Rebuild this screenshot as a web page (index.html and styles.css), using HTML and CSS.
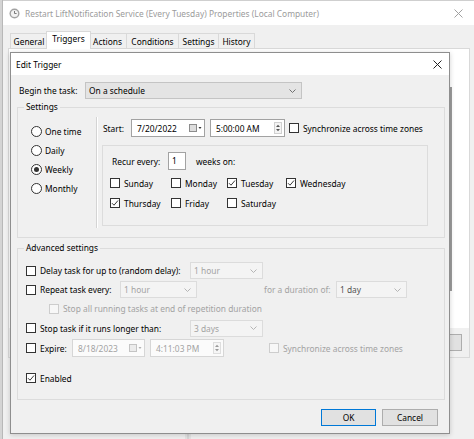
FILE: index.html
```html
<!DOCTYPE html>
<html lang="en">
<head>
<meta charset="utf-8">
<title>Edit Trigger</title>
<link rel="stylesheet" href="styles.css">
</head>
<body>
<div class="bgwin">
  <div class="titlebar">
    <svg class="clock" width="11" height="11" viewBox="0 0 11 11"><circle cx="5.5" cy="5.5" r="5" fill="#a2a2a2"/><circle cx="5.5" cy="5.5" r="3.6" fill="#f2f2f2"/><path d="M5.5 5.5V3M5.5 5.5H7.6" stroke="#7a7a7a" stroke-width="1" fill="none"/></svg>
    <span class="title">Restart LiftNotification Service (Every Tuesday) Properties (Local Computer)</span>
    <svg class="tb-close" width="9" height="9" viewBox="0 0 9 9"><path d="M0.5 0.5L8.5 8.5M8.5 0.5L0.5 8.5" stroke="#a0a0a0" stroke-width="1"/></svg>
  </div>
  <div class="tabs">
    <span class="tab w-general">General</span>
    <span class="tab active w-triggers">Triggers</span>
    <span class="tab w-actions">Actions</span>
    <span class="tab w-conditions">Conditions</span>
    <span class="tab w-settings">Settings</span>
    <span class="tab w-history">History</span>
  </div>
  <div class="panel">
    <div class="list"><span class="vscroll"></span></div>
    <div class="panel-foot"><span class="ghost-btn"></span></div>
  </div>
</div>
<span class="bg-mark"></span>

<div class="dialog">
  <div class="dlg-title">
    <span>Edit Trigger</span>
    <svg class="dlg-close" width="9" height="9" viewBox="0 0 9 9"><path d="M0.5 0.5L8.5 8.5M8.5 0.5L0.5 8.5" stroke="#222" stroke-width="1"/></svg>
  </div>
  <div class="dlg-body">
    <div class="begin-row">
      <span class="lbl-begin">Begin the task:</span>
      <div class="combo combo-begin"><span>On a schedule</span><svg width="7" height="4" viewBox="0 0 7 4"><path d="M0.5 0.5L3.5 3.5L6.5 0.5" stroke="#707070" fill="none"/></svg></div>
    </div>

    <fieldset class="group settings">
      <legend>Settings</legend>
      <div class="settings-inner">
        <div class="freq">
          <div class="radio-row"><span class="radio"></span>One time</div>
          <div class="radio-row"><span class="radio"></span>Daily</div>
          <div class="radio-row"><span class="radio on"><span class="dot"></span></span>Weekly</div>
          <div class="radio-row"><span class="radio"></span>Monthly</div>
        </div>
        <div class="vsep"></div>
        <div class="sched">
          <div class="start-row">
            <span class="lbl-start">Start:</span>
            <div class="field date"><span class="ftext">7/20/2022</span><svg width="13" height="8" viewBox="0 0 13 8"><rect x="0.5" y="0.5" width="7" height="7" fill="#dedede" stroke="#8c8c8c"/><path d="M9.5 3L12.5 3L11 5Z" fill="#333"/></svg></div>
            <div class="field time"><span class="ftext">5:00:00 AM</span><svg class="spin" width="8" height="12" viewBox="0 0 8 12"><rect x="0.5" y="0.5" width="7" height="11" fill="#f4f4f4" stroke="#d0d0d0"/><path d="M2 5L4 2.8L6 5Z M2 7L4 9.2L6 7Z" fill="#555"/></svg></div>
            <span class="check"></span>
            <span class="chk-label">Synchronize across time zones</span>
          </div>
          <div class="recur">
            <div class="recur-row">
              <span class="lbl-recur">Recur every:</span>
              <span class="num">1</span>
              <span class="weeks">weeks on:</span>
            </div>
            <div class="days">
              <div class="day"><span class="check"></span>Sunday</div>
              <div class="day"><span class="check"></span>Monday</div>
              <div class="day"><span class="check on"><svg width="8" height="8" viewBox="0 0 8 8"><path d="M1 4.2L3 6.2L7 1.5" stroke="#222" fill="none" stroke-width="0.9"/></svg></span>Tuesday</div>
              <div class="day"><span class="check on"><svg width="8" height="8" viewBox="0 0 8 8"><path d="M1 4.2L3 6.2L7 1.5" stroke="#222" fill="none" stroke-width="0.9"/></svg></span>Wednesday</div>
              <div class="day"><span class="check on"><svg width="8" height="8" viewBox="0 0 8 8"><path d="M1 4.2L3 6.2L7 1.5" stroke="#222" fill="none" stroke-width="0.9"/></svg></span>Thursday</div>
              <div class="day"><span class="check"></span>Friday</div>
              <div class="day"><span class="check"></span>Saturday</div>
            </div>
          </div>
        </div>
      </div>
    </fieldset>

    <fieldset class="group adv">
      <legend>Advanced settings</legend>
      <div class="adv-inner">
        <div class="arow r19">
          <span class="check"></span>
          <span class="alabel w150">Delay task for up to (random delay):</span>
          <div class="combo dis w73"><span>1 hour</span><svg width="7" height="4" viewBox="0 0 7 4"><path d="M0.5 0.5L3.5 3.5L6.5 0.5" stroke="#b5b5b5" fill="none"/></svg></div>
        </div>
        <div class="arow r19">
          <span class="check"></span>
          <span class="alabel w80">Repeat task every:</span>
          <div class="combo dis w77"><span>1 hour</span><svg width="7" height="4" viewBox="0 0 7 4"><path d="M0.5 0.5L3.5 3.5L6.5 0.5" stroke="#b5b5b5" fill="none"/></svg></div>
          <span class="alabel dim dur">for a duration of:</span>
          <div class="combo dis w71"><span class="dark">1 day</span><svg width="7" height="4" viewBox="0 0 7 4"><path d="M0.5 0.5L3.5 3.5L6.5 0.5" stroke="#b5b5b5" fill="none"/></svg></div>
        </div>
        <div class="arow r19 indent">
          <span class="check dis"></span>
          <span class="alabel dim">Stop all running tasks at end of repetition duration</span>
        </div>
        <div class="arow r20">
          <span class="check"></span>
          <span class="alabel w150">Stop task if it runs longer than:</span>
          <div class="combo dis w73"><span>3 days</span><svg width="7" height="4" viewBox="0 0 7 4"><path d="M0.5 0.5L3.5 3.5L6.5 0.5" stroke="#b5b5b5" fill="none"/></svg></div>
        </div>
        <div class="arow r20">
          <span class="check"></span>
          <span class="alabel w32">Expire:</span>
          <div class="field dis edate"><span class="ftext">8/18/2023</span><svg width="13" height="8" viewBox="0 0 13 8"><rect x="0.5" y="0.5" width="7" height="7" fill="#ececec" stroke="#c4c4c4"/><path d="M9.5 3L12.5 3L11 5Z" fill="#b0b0b0"/></svg></div>
          <div class="field dis etime"><span class="ftext">4:11:03 PM</span><svg class="spin" width="8" height="12" viewBox="0 0 8 12"><rect x="0.5" y="0.5" width="7" height="11" fill="#f6f6f6" stroke="#dedede"/><path d="M2 5L4 2.8L6 5Z M2 7L4 9.2L6 7Z" fill="#9a9a9a"/></svg></div>
          <span class="check dis esync"></span>
          <span class="alabel dim">Synchronize across time zones</span>
        </div>
        <div class="arow r20 enabled">
          <span class="check on"><svg width="8" height="8" viewBox="0 0 8 8"><path d="M1 4.2L3 6.2L7 1.5" stroke="#222" fill="none" stroke-width="0.9"/></svg></span>
          <span class="alabel">Enabled</span>
        </div>
      </div>
    </fieldset>

    <div class="buttons">
      <button class="btn ok">OK</button>
      <button class="btn cancel">Cancel</button>
    </div>
  </div>
</div>
</body>
</html>
```

FILE: styles.css
```css
* { box-sizing: border-box; }
html, body { margin: 0; padding: 0; }
body {
  width: 474px;
  height: 439px;
  overflow: hidden;
  position: relative;
  background: #d4d4d4;
  font-family: "Noto Sans", "Open Sans", sans-serif;
  font-size: 8.4px;
  color: #000;
}

/* ---------- background properties window ---------- */
.bgwin {
  position: absolute;
  left: 2px;
  top: 0;
  width: 474px;
  height: 439px;
  background: #f0f0f0;
  border-left: 1px solid #b8b8b8;
}
.titlebar {
  height: 25px;
  background: #fff;
  border-top: 1px solid #cfcfcf;
  display: flex;
  align-items: center;
  padding-left: 6px;
}
.title { color: #9b9b9b; margin-left: 5px; flex: 1; white-space: nowrap; }
.tb-close { margin-right: 13px; }

.tabs {
  display: flex;
  align-items: flex-end;
  height: 18px;
  margin: 5px 0 0 7px;
}
.tab {
  height: 15px;
  border: 1px solid #d9d9d9;
  border-bottom: none;
  margin-left: -1px;
  background: #f0f0f0;
  display: flex;
  align-items: center;
  justify-content: center;
  white-space: nowrap;
}
.tab.active {
  height: 18px;
  background: #fff;
  margin: 0 -2px -1px -2px;
  position: relative;
  z-index: 1;
  align-items: flex-start;
  padding-top: 1px;
}
.w-general { width: 38px; margin-left: 0; }
.w-triggers { width: 45px; }
.w-actions { width: 39px; }
.w-conditions { width: 53px; }
.w-settings { width: 41px; }
.w-history { width: 37px; }

.panel {
  margin-left: 5px;
  width: 462px;
  height: 310px;
  border: 1px solid #d9d9d9;
  display: flex;
  flex-direction: column;
}
.list {
  height: 279px;
  background: #fff;
  padding: 38px 0 0 441px;
}
.vscroll { display: block; width: 2px; height: 204px; background: #9c9c9c; }
.panel-foot {
  flex: 1;
  background: #f0f0f0;
  display: flex;
  justify-content: flex-end;
  align-items: flex-start;
  padding: 6px 7px 0 0;
}
.ghost-btn { width: 60px; height: 17px; background: #e1e1e1; border: 1px solid #adadad; }
.bg-mark {
  position: absolute;
  left: 185px;
  top: 434px;
  width: 6px;
  height: 5px;
  background: #d6d6d6;
  border-left: 2px solid #e4e4e4;
  border-right: 2px solid #e4e4e4;
}

/* ---------- Edit Trigger dialog ---------- */
.dialog {
  position: absolute;
  left: 10px;
  top: 52px;
  width: 440px;
  height: 382px;
  border: 1px solid #8e8e8e;
  background: #f0f0f0;
  box-shadow: 0 1px 5px rgba(0,0,0,0.18);
  display: flex;
  flex-direction: column;
}
.dlg-title {
  height: 22px;
  background: #fff;
  display: flex;
  align-items: center;
  justify-content: space-between;
  padding: 0 7px 0 5px;
}
.dlg-body { padding: 7px 4px 0 6px; }

.begin-row { display: flex; align-items: center; height: 17px; margin-left: 2px; }
.lbl-begin { width: 66px; white-space: nowrap; }

.combo {
  height: 17px;
  display: flex;
  align-items: center;
  justify-content: space-between;
  padding: 0 5px 0 3px;
  border: 1px solid #c4c4c4;
  background: #e4e4e4;
  white-space: nowrap;
}
.combo-begin { width: 217px; }
.combo.dis { background: #f4f4f4; border-color: #dcdcdc; color: #a3a3a3; }
.combo .dark { color: #555; }
.w73 { width: 73px; }
.w77 { width: 77px; }
.w71 { width: 71px; }

.group {
  margin: 0;
  padding: 0;
  border: 1px solid #dcdcdc;
  min-width: 0;
}
.group legend {
  line-height: 12px;
  padding: 0 2px;
  margin-left: 6px;
}
.settings { margin-top: 2px; }
.adv { margin-top: 4px; }

.settings-inner { display: flex; height: 124px; }
.freq { width: 78px; padding: 9px 0 0 13px; }
.radio-row { height: 19px; display: flex; align-items: center; gap: 3px; white-space: nowrap; }
.radio {
  width: 11px;
  height: 11px;
  border: 1px solid #333;
  border-radius: 50%;
  background: #fff;
  display: flex;
  align-items: center;
  justify-content: center;
  flex: none;
}
.radio .dot { width: 5px; height: 5px; border-radius: 50%; background: #333; }
.vsep {
  width: 2px;
  height: 111px;
  margin-top: 4px;
  border-left: 1px solid #d4d4d4;
  border-right: 1px solid #fff;
}
.sched { padding: 6px 0 0 4px; }
.start-row { display: flex; align-items: center; height: 18px; margin-left: 1px; white-space: nowrap; }
.lbl-start { width: 28px; }
.field {
  height: 18px;
  display: flex;
  align-items: center;
  justify-content: space-between;
  padding: 0 2px 0 5px;
  border: 1px solid #a2a2a2;
  background: #fff;
  white-space: nowrap;
}
.field.date { width: 74px; }
.field.time { width: 75px; margin-left: 5px; }
.start-row .check { margin-left: 4px; }
.chk-label { margin-left: 4px; }
.field.dis { border-color: #d6d6d6; background: #fbfbfb; color: #a3a3a3; }
.edate { width: 73px; }
.etime { width: 74px; margin-left: 5px; }

.check {
  width: 10px;
  height: 10px;
  border: 1px solid #333;
  background: #fff;
  display: inline-flex;
  align-items: center;
  justify-content: center;
  flex: none;
}
.check.dis { border-color: #cdcdcd; background: #f7f7f7; }

.recur {
  width: 326px;
  height: 81px;
  margin-top: 8px;
  border: 1px solid #dcdcdc;
  padding: 6px 0 0 7px;
}
.recur-row { display: flex; align-items: center; height: 18px; margin-left: 2px; }
.lbl-recur { width: 56px; white-space: nowrap; }
.num {
  width: 18px;
  height: 18px;
  border: 1px solid #a2a2a2;
  background: #fff;
  padding: 1px 0 0 3px;
  line-height: 14px;
}
.weeks { margin-left: 10px; }
.days {
  display: grid;
  grid-template-columns: 61px 56px 59px auto;
  grid-auto-rows: 20px;
  margin-top: 3px;
}
.day { display: flex; align-items: center; gap: 4px; white-space: nowrap; }

.adv-inner { padding: 7px 0 11px 8px; }
.arow { display: flex; align-items: center; white-space: nowrap; }
.r19 { height: 19px; }
.r20 { height: 20px; }
.arow .alabel { margin-left: 4px; }
.w150 { width: 150px; flex: none; }
.w80 { width: 80px; flex: none; }
.w32 { width: 32px; flex: none; }
.alabel.dim { color: #a3a3a3; }
.alabel.dur { margin-left: 67px; width: 72px; }
.indent { padding-left: 23px; }
.esync { margin-left: 45px; }
.enabled { margin-top: 10px; }

.buttons {
  display: flex;
  justify-content: flex-end;
  gap: 6px;
  margin: 9px 7px 0 0;
}
.btn {
  height: 17px;
  padding: 0;
  font: inherit;
  color: #000;
  background: #e1e1e1;
  border: 1px solid #adadad;
}
.btn.ok { width: 55px; border-color: #0078d7; }
.btn.cancel { width: 56px; }
```
